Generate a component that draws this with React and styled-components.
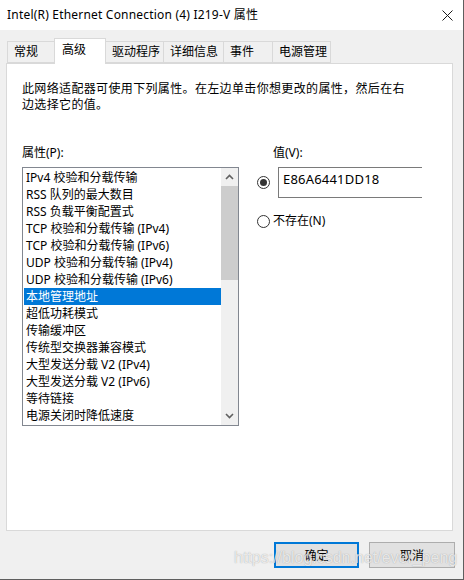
import React from "react";
import styled, { createGlobalStyle } from "styled-components";

const GlobalStyle = createGlobalStyle`
  html, body {
    margin: 0;
    padding: 0;
    background: #ffffff;
  }
  body {
    font-family: "Noto Sans", "Noto Sans CJK SC", sans-serif;
    font-size: 12px;
    color: #000;
  }
`;

const Window = styled.div`
  position: relative;
  width: 463px;
  height: 579px;
  border-right: 1px solid #5e5e5e;
  border-bottom: 1px solid #5e5e5e;
  display: flex;
  flex-direction: column;
  background: #f0f0f0;
  overflow: hidden;
`;

const TitleBar = styled.div`
  height: 30px;
  flex: none;
  background: #ffffff;
  display: flex;
  align-items: center;
  justify-content: space-between;
  padding: 0 10px 0 7px;
  font-size: 12px;
  line-height: 16px;
  letter-spacing: 0.2px;
`;

const Body = styled.div`
  flex: 1;
  display: flex;
  flex-direction: column;
  padding: 8px 0 0 6px;
`;

const TabStrip = styled.div`
  display: flex;
  align-items: flex-end;
  height: 25px;
  padding-left: 1px;
  position: relative;
  z-index: 1;
`;

const Tab = styled.div`
  box-sizing: border-box;
  width: ${p => p.$w}px;
  height: ${p => (p.$active ? 26 : 22)}px;
  margin-bottom: ${p => (p.$active ? -1 : 0)}px;
  margin-left: -1px;
  &:first-child { margin-left: 0; }
  background: ${p => (p.$active ? "#ffffff" : "#f0f0f0")};
  border: 1px solid #d9d9d9;
  border-bottom: ${p => (p.$active ? "none" : "1px solid #d9d9d9")};
  padding-left: ${p => (p.$active ? 7 : 6)}px;
  line-height: ${p => (p.$active ? 22 : 20)}px;
  font-size: 12px;
  white-space: nowrap;
`;

const Panel = styled.div`
  box-sizing: border-box;
  width: 447px;
  height: 468px;
  background: #ffffff;
  border: 1px solid #d9d9d9;
  padding: 17px 0 0 15px;
`;

const Desc = styled.p`
  margin: 0;
  width: 384px;
  line-height: 16px;
  letter-spacing: 0.35px;
`;

const Columns = styled.div`
  display: grid;
  grid-template-columns: 217px 1fr;
  column-gap: 18px;
  margin-top: 32px;
`;

const Label = styled.div`
  line-height: 16px;
  padding-left: ${p => p.$indent || 0}px;
  margin-bottom: 6px;
`;

const ListBox = styled.div`
  box-sizing: border-box;
  width: 217px;
  height: 259px;
  border: 1px solid #828790;
  display: flex;
`;

const Items = styled.div`
  width: 198px;
  padding-top: 1px;
  overflow: hidden;
`;

const Item = styled.div`
  height: 17px;
  line-height: 17px;
  margin-left: 1px;
  padding-left: 2px;
  white-space: nowrap;
  background: ${p => (p.$selected ? "#0078d7" : "transparent")};
  color: ${p => (p.$selected ? "#ffffff" : "#000")};
`;

const ScrollBar = styled.div`
  width: 17px;
  background: #f0f0f0;
  display: flex;
  flex-direction: column;
`;

const ScrollArrow = styled.div`
  height: 18px;
  display: flex;
  align-items: center;
  justify-content: center;
  flex: none;
`;

const Thumb = styled.div`
  height: 94px;
  background: #cdcdcd;
  flex: none;
`;

const Track = styled.div`
  flex: 1;
`;

const OptionRow = styled.div`
  display: flex;
  align-items: center;
  gap: ${p => p.$gap}px;
  margin-top: ${p => p.$top || 0}px;
  line-height: 16px;
`;

const Radio = styled.span`
  box-sizing: border-box;
  width: 13px;
  height: 13px;
  border-radius: 50%;
  border: 1px solid #333333;
  background: #fff;
  display: flex;
  align-items: center;
  justify-content: center;
  flex: none;
  &::after {
    content: "";
    width: 7px;
    height: 7px;
    border-radius: 50%;
    background: ${p => (p.$checked ? "#333333" : "transparent")};
  }
`;

const ValueBox = styled.div`
  box-sizing: border-box;
  width: 144px;
  height: 31px;
  border: 1px solid #7a7a7a;
  border-right: none;
  padding: 3px 0 0 4px;
  font-size: 13px;
  line-height: 17px;
  letter-spacing: 0.2px;
`;

const ButtonRow = styled.div`
  display: flex;
  justify-content: flex-end;
  gap: 10px;
  padding-right: 8px;
  margin-top: 11px;
`;

const Button = styled.div`
  box-sizing: border-box;
  width: ${p => p.$w}px;
  height: 26px;
  background: #e1e1e1;
  border: ${p => (p.$default ? "2px solid #0078d7" : "1px solid #adadad")};
  display: flex;
  align-items: center;
  justify-content: center;
  font-size: 12px;
`;

const Watermark = styled.div`
  position: absolute;
  left: 234px;
  top: 548px;
  font-family: "Liberation Sans", Arial, sans-serif;
  font-size: 16px;
  line-height: 20px;
  color: rgba(255, 255, 255, 0.75);
  text-shadow: 0 0 1px rgba(90, 90, 90, 0.55);
  pointer-events: none;
  white-space: nowrap;
`;

const tabs = [
  { label: "常规", w: 48 },
  { label: "高级", w: 52, active: true },
  { label: "驱动程序", w: 59 },
  { label: "详细信息", w: 61 },
  { label: "事件", w: 50 },
  { label: "电源管理", w: 59 },
];

const props = [
  "IPv4 校验和分载传输",
  "RSS 队列的最大数目",
  "RSS 负载平衡配置式",
  "TCP 校验和分载传输 (IPv4)",
  "TCP 校验和分载传输 (IPv6)",
  "UDP 校验和分载传输 (IPv4)",
  "UDP 校验和分载传输 (IPv6)",
  "本地管理地址",
  "超低功耗模式",
  "传输缓冲区",
  "传统型交换器兼容模式",
  "大型发送分载 V2 (IPv4)",
  "大型发送分载 V2 (IPv6)",
  "等待链接",
  "电源关闭时降低速度",
];

function Chevron({ down }) {
  return (
    <svg width="9" height="6" viewBox="0 0 9 6">
      <polyline
        points={down ? "1,1 4.5,4.5 8,1" : "1,5 4.5,1.5 8,5"}
        fill="none"
        stroke="#606060"
        strokeWidth="1.6"
      />
    </svg>
  );
}

export default function App() {
  return (
    <>
      <GlobalStyle />
      <Window>
        <TitleBar>
          <span>Intel(R) Ethernet Connection (4) I219-V 属性</span>
          <svg width="11" height="11" viewBox="0 0 11 11">
            <path d="M0.5 0.5 L10.5 10.5 M10.5 0.5 L0.5 10.5" stroke="#1a1a1a" strokeWidth="1" />
          </svg>
        </TitleBar>
        <Body>
          <TabStrip>
            {tabs.map(t => (
              <Tab key={t.label} $w={t.w} $active={t.active}>{t.label}</Tab>
            ))}
          </TabStrip>
          <Panel>
            <Desc>此网络适配器可使用下列属性。在左边单击你想更改的属性，然后在右边选择它的值。</Desc>
            <Columns>
              <div>
                <Label>属性(P):</Label>
                <ListBox>
                  <Items>
                    {props.map(p => (
                      <Item key={p} $selected={p === "本地管理地址"}>{p}</Item>
                    ))}
                  </Items>
                  <ScrollBar>
                    <ScrollArrow><Chevron /></ScrollArrow>
                    <Thumb />
                    <Track />
                    <ScrollArrow><Chevron down /></ScrollArrow>
                  </ScrollBar>
                </ListBox>
              </div>
              <div>
                <Label $indent={16}>值(V):</Label>
                <OptionRow $gap={8}>
                  <Radio $checked />
                  <ValueBox>E86A6441DD18</ValueBox>
                </OptionRow>
                <OptionRow $gap={3} $top={15}>
                  <Radio />
                  <span>不存在(N)</span>
                </OptionRow>
              </div>
            </Columns>
          </Panel>
          <ButtonRow>
            <Button $w={85} $default>确定</Button>
            <Button $w={86}>取消</Button>
          </ButtonRow>
        </Body>
        <Watermark>https://blog.csdn.net/ever_peng</Watermark>
      </Window>
    </>
  );
}
